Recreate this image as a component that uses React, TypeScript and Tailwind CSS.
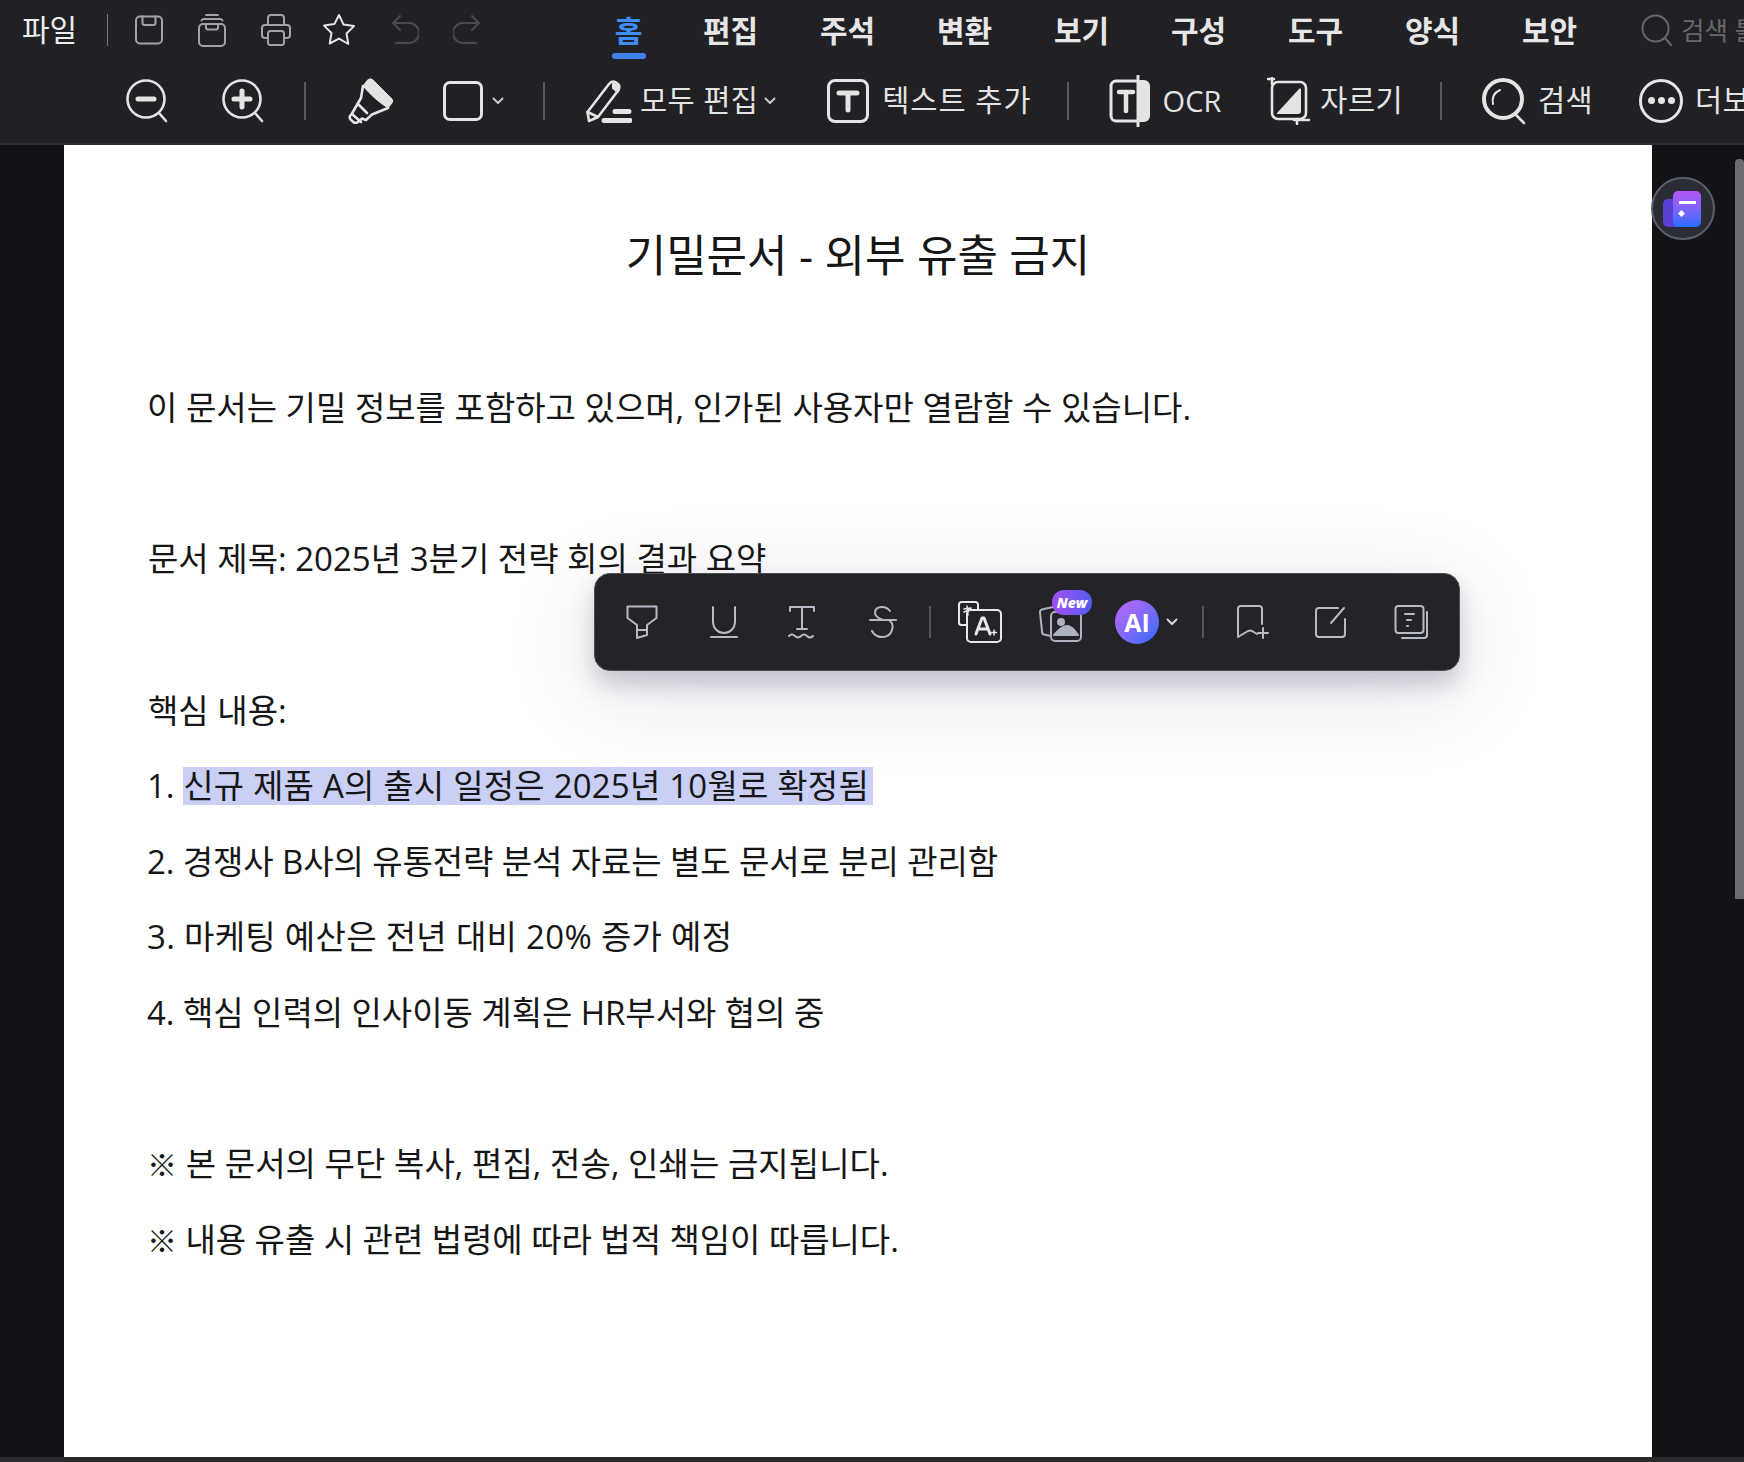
import React from "react";

const Svg = ({
  w,
  h,
  className,
  children,
}: {
  w: number;
  h: number;
  className?: string;
  children: React.ReactNode;
}) => (
  <svg
    width={w}
    height={h}
    viewBox={`0 0 ${w} ${h}`}
    fill="none"
    stroke="currentColor"
    strokeWidth={2}
    strokeLinecap="round"
    strokeLinejoin="round"
    className={`shrink-0 ${className ?? ""}`}
  >
    {children}
  </svg>
);

const Divider = ({ className }: { className: string }) => (
  <div className={`h-[38px] w-[2px] shrink-0 bg-[#5a5a5e] ${className}`} />
);

const Chevron = ({ className }: { className: string }) => (
  <Svg w={12} h={8} className={className}>
    <path d="M1.5 1.5 6 6l4.5-4.5" />
  </Svg>
);

const TopIcons = () => (
  <div className="flex shrink-0 items-center">
    <div className="flex w-[63px] justify-center text-[#a3a3a6]">
      <Svg w={28} h={30}>
        <rect x="1" y="1.5" width="26" height="27" rx="4" />
        <path d="M7.5 1.5V8a2 2 0 0 0 2 2h9a2 2 0 0 0 2-2V1.5" />
      </Svg>
    </div>
    <div className="flex w-[63px] justify-center text-[#a3a3a6]">
      <Svg w={28} h={34}>
        <path d="M8 2h12M3.5 7.5Q4 6 6 6h16q2 0 2.5 1.5" />
        <rect x="1" y="11" width="26" height="22" rx="4" />
        <path d="M8 11v3.5a2 2 0 0 0 2 2h8a2 2 0 0 0 2-2V11" />
      </Svg>
    </div>
    <div className="flex w-[66px] justify-center text-[#a3a3a6]">
      <Svg w={30} h={32}>
        <path d="M7 11V4a3 3 0 0 1 3-3h10a3 3 0 0 1 3 3v7" />
        <path d="M7 24H4a3 3 0 0 1-3-3v-7a3 3 0 0 1 3-3h22a3 3 0 0 1 3 3v7a3 3 0 0 1-3 3h-3" />
        <rect x="7" y="17" width="16" height="14" rx="2.5" />
      </Svg>
    </div>
    <div className="flex w-[60px] justify-center text-[#e4e4e4]">
      <Svg w={34} h={34}>
        <path d="m17 2 4.6 9.6 10.4 1.5-7.5 7.4 1.8 10.5L17 25.6 7.7 30.5l1.8-10.5L2 12.6l10.4-1.5z" />
      </Svg>
    </div>
    <div className="flex w-[72px] justify-center text-[#4a4a4e]">
      <Svg w={28} h={32}>
        <path d="M9 2 2 9l7 7M2 9h16a8 8 0 0 1 0 20H5" />
      </Svg>
    </div>
    <div className="flex w-[52px] justify-center text-[#4a4a4e]">
      <Svg w={28} h={32}>
        <path d="m19 2 7 7-7 7M26 9H10a8 8 0 0 0 0 20h13" />
      </Svg>
    </div>
  </div>
);

const tabs = ["편집", "주석", "변환", "보기", "구성", "도구", "양식", "보안"];

const TopRow = () => (
  <div className="flex h-[60px] shrink-0 items-center whitespace-nowrap pl-[22px]">
    <span className="w-[55px] shrink-0 text-[30px] leading-none text-[#ececec]">파일</span>
    <div className="ml-[30px] h-[32px] w-[1px] shrink-0 bg-[#77777a]" />
    <div className="ml-[9px] shrink-0">
      <TopIcons />
    </div>
    <div className="ml-[92px] flex shrink-0">
      <div className="relative w-[87px] shrink-0 text-center text-[30px] font-semibold text-[#3f8cf5]">
        홈
        <div className="absolute left-[27px] top-[45px] h-[6px] w-[34px] rounded-full bg-[#3f82f0]" />
      </div>
      {tabs.map((t) => (
        <div key={t} className="w-[117px] shrink-0 text-center text-[30px] font-semibold text-[#e6e6e6]">
          {t}
        </div>
      ))}
    </div>
    <div className="ml-[33px] flex shrink-0 items-center text-[#68686c]">
      <Svg w={32} h={32}>
        <circle cx="14.5" cy="14.5" r="13" />
        <path d="m24 24 6 7" />
      </Svg>
      <span className="ml-[8px] text-[25.5px]">검색 틀</span>
    </div>
  </div>
);

const ToolRow = () => (
  <div className="flex h-[83px] shrink-0 items-center whitespace-nowrap pb-[2px] pl-[126px] text-[29.5px] tracking-[0.4px] text-[#e4e4e4]">
    <Svg w={44} h={46}>
      <g strokeWidth={2.6}>
        <circle cx="20" cy="21" r="18.5" />
        <path d="m33 35 7 8" />
        <path d="M12 21h16" strokeWidth={5} />
      </g>
    </Svg>
    <Svg w={44} h={46} className="ml-[52px]">
      <g strokeWidth={2.6}>
        <circle cx="20" cy="21" r="18.5" />
        <path d="m33 35 7 8" />
        <path d="M12 21h16M20 13v16" strokeWidth={5} />
      </g>
    </Svg>
    <Divider className="ml-[38px]" />
    <Svg w={46} h={46} className="ml-[42px]">
      <path
        d="M15 8 20 1.5Q23 0 25 2L44 21q1.5 2 0 4l-4 5Q27 22 15 8z"
        fill="currentColor"
        strokeWidth={1}
      />
      <path
        d="M15 8 13 20 4 35.500 2 38q-1 2 1 4l3 2.500q2 1 4-.5l4-3.500 4 1.500 6-5.500 16-6.500"
        strokeWidth={2.600}
      />
      <path d="m4 36 9 8M10 26l9 9" strokeWidth={2.600} />
    </Svg>
    <div className="ml-[49px] h-[40px] w-[40px] shrink-0 rounded-[7px] border-[3px] border-[#e4e4e4]" />
    <Chevron className="ml-[9px] text-[#c9c9c9]" />
    <Divider className="ml-[39px]" />
    <Svg w={46} h={44} className="ml-[41px]">
      <g strokeWidth={2.600}>
        <path d="M3 42 1.500 33 23 5q3-4 7-1.500l1.500 1q3 2.500 1 6.500L12 38z" />
        <path d="m1.500 33 10.500 5" />
      </g>
      <path d="M27 5q3 0 5 3 1.500 3-.5 5L27 9z" fill="currentColor" />
      <path d="M29 32.500h14M18 41.500h26" strokeWidth={5} />
    </Svg>
    <span className="ml-[8px] shrink-0">모두 편집</span>
    <Chevron className="ml-[6px] text-[#c9c9c9]" />
    <div className="ml-[51px] flex h-[44px] w-[42px] shrink-0 items-center justify-center rounded-[8px] border-[3px] border-[#e4e4e4]">
      <Svg w={24} h={24}>
        <path d="M3 4h18M12 4v17" strokeWidth={5} />
      </Svg>
    </div>
    <span className="ml-[13px] shrink-0 tracking-[1px]">텍스트 추가</span>
    <Divider className="ml-[35px]" />
    <Svg w={44} h={52} className="ml-[40px]">
      <path d="M29 6H7a5 5 0 0 0-5 5v30a5 5 0 0 0 5 5h22" strokeWidth={3} />
      <path d="M10 17h14M17 17v19" strokeWidth={4.500} />
      <path d="M29 1v50" strokeWidth={3} />
      <path d="M30 6h5a5 5 0 0 1 5 5v30a5 5 0 0 1-5 5h-5z" fill="currentColor" />
    </Svg>
    <span className="ml-[10px] shrink-0 text-[29px] tracking-normal">OCR</span>
    <Svg w={44} h={48} className="ml-[46px]">
      <g strokeWidth={2.600}>
        <path d="M1 2h6M5 1v6" />
        <rect x="5" y="5" width="34" height="37" rx="6" />
        <path d="M30 47v-5M27 43h15" />
      </g>
      <path
        d="M10 36 32 12q2-2 2 1v21q0 3-3 3H11q-2 0-1-1z"
        fill="currentColor"
        stroke="none"
      />
    </Svg>
    <span className="ml-[9px] shrink-0">자르기</span>
    <Divider className="ml-[37px]" />
    <Svg w={46} h={48} className="ml-[40px]">
      <circle cx="21" cy="22" r="19" strokeWidth={4} />
      <path d="m33 37 9 9" strokeWidth={2.600} />
      <path d="M11 27q-2-10 7-14" strokeWidth={2} />
    </Svg>
    <span className="ml-[10px] shrink-0">검색</span>
    <div className="ml-[46px] flex h-[44px] w-[44px] shrink-0 items-center justify-center gap-[3px] rounded-full border-[3px] border-[#e4e4e4]">
      <div className="h-[7px] w-[7px] rounded-full bg-[#e4e4e4]" />
      <div className="h-[7px] w-[7px] rounded-full bg-[#e4e4e4]" />
      <div className="h-[7px] w-[7px] rounded-full bg-[#e4e4e4]" />
    </div>
    <span className="ml-[12px] shrink-0">더보기</span>
  </div>
);

const FloatingBar = () => (
  <div className="absolute left-[530px] top-[428px] z-10 flex h-[98px] w-[866px] items-center rounded-[16px] border border-[#4c5058] bg-[#232328] text-[#b6bac4] shadow-[0_14px_24px_rgba(40,40,70,0.22),0_20px_90px_rgba(60,60,110,0.14)]">
    <Svg w={32} h={36} className="ml-[31px]">
      <path d="M1.500 2.500h29V14L21 21v5H11v-5L1.500 14z" />
      <path d="M11 26v8l10-3v-5" />
    </Svg>
    <Svg w={28} h={34} className="ml-[52px]">
      <path d="M3 2v15a11 11 0 0 0 22 0V2M1 32h26" />
    </Svg>
    <Svg w={28} h={34} className="ml-[50px]">
      <path d="M2 6V2h24v4M14 2v22M9 24h10" />
      <path d="M1 31q3-3 6 0t6 0 6 0 6 0" />
    </Svg>
    <Svg w={28} h={34} className="ml-[53px]">
      <path d="M21 6Q18 2 13 2 6 2 6 8q0 4 8 7M1 15h26" />
      <path d="M21 16q4 3 2 9-2 7-10 7-7 0-10-6" />
    </Svg>
    <div className="ml-[32px] h-[32px] w-[2px] bg-[#55555a]" />
    <div className="relative ml-[27px] h-[42px] w-[44px] text-[#e8e8ec]">
      <Svg w={44} h={42}>
        <path d="M9 24H3a2.500 2.500 0 0 1-2-2.500V3.500A2.500 2.500 0 0 1 3.500 1h14A2.500 2.500 0 0 1 20 3.500V9" />
        <path d="m6 8 7-1M9 5l1 9M13 8l-7 3" strokeWidth={1.500} />
        <rect x="9" y="9" width="34" height="32" rx="4" />
        <path d="m18 33 6-16h2l6 16M20 28h10" strokeWidth={3} />
        <path d="M36 29v5M33.500 31.500h5" strokeWidth={1.500} />
      </Svg>
    </div>
    <div className="relative ml-[37px] h-[40px] w-[44px] text-[#aeb2c0]">
      <Svg w={44} h={40}>
        <path d="M12 34 5 32.500q-2-.5-2-3L1 10q0-2 2-2.500L14 5" />
        <rect x="12" y="10" width="30" height="29" rx="4" />
        <circle cx="22" cy="20" r="3" fill="currentColor" />
        <path d="M15 33q8-9 13-9t11 9z" fill="currentColor" />
      </Svg>
      <div className="absolute -top-[12px] left-[13px] flex h-[25px] w-[40px] items-center justify-center rounded-[12px] bg-gradient-to-r from-[#a24df0] to-[#4f5af0] text-[14px] font-extrabold italic text-white">
        New
      </div>
    </div>
    <div className="ml-[32px] flex h-[44px] w-[44px] shrink-0 items-center justify-center rounded-full bg-gradient-to-br from-[#c062f5] to-[#0f6afc] text-[25px] font-bold leading-none text-white">
      AI
    </div>
    <Chevron className="ml-[7px] text-[#d6d6da]" />
    <div className="ml-[24px] h-[32px] w-[2px] bg-[#55555a]" />
    <Svg w={34} h={34} className="ml-[32px]">
      <path d="M26 19V4a3 3 0 0 0-3-3H5a3 3 0 0 0-3 3v28l10-6q2-1 4 0l5 3" />
      <path d="M27 23v10M22 28h10" />
    </Svg>
    <Svg w={32} h={32} className="ml-[44px]">
      <path d="M24 2H5a3 3 0 0 0-3 3v23a3 3 0 0 0 3 3h23a3 3 0 0 0 3-3V13" />
      <path d="M30 2 17 17" />
    </Svg>
    <Svg w={34} h={34} className="ml-[48px]">
      <rect x="1.500" y="1" width="28" height="27" rx="3" />
      <path d="M11 9h9M13 15h4M13 21h1" />
      <path d="M33 7v23a3 3 0 0 1-3 3H8" />
    </Svg>
  </div>
);

const Line = ({ className, children }: { className?: string; children?: React.ReactNode }) => (
  <p className={`h-[75.6px] whitespace-nowrap leading-[75.6px] ${className ?? ""}`}>{children ?? " "}</p>
);

export default function App() {
  return (
    <div className="relative flex h-[1462px] w-[1744px] flex-col overflow-hidden bg-[#121316] font-['Open_Sans','Noto_Sans_CJK_KR',sans-serif]">
      <header className="w-full shrink-0 overflow-hidden border-b-2 border-[#2e2e32] bg-[#202025]">
        <TopRow />
        <ToolRow />
      </header>

      <main className="relative flex min-h-0 flex-1">
        <div className="relative ml-[64px] w-[1588px] bg-white px-[84px] pt-[74px] text-[33px] text-[#161616]">
          <h1 className="h-[75.6px] text-center text-[44px] leading-[73px]">
            기밀문서 - 외부 유출 금지
          </h1>
          <Line />
          <Line className="-ml-[1px]">이 문서는 기밀 정보를 포함하고 있으며, 인가된 사용자만 열람할 수 있습니다.</Line>
          <Line />
          <Line>문서 제목: 2025년 3분기 전략 회의 결과 요약</Line>
          <Line />
          <Line>핵심 내용:</Line>
          <Line className="-ml-[1px]">
            1.{" "}
            <span className="inline-block h-[38px] bg-[#c9cff5] pr-[4px] leading-[38px] tracking-[0.2px]">
              신규 제품 A의 출시 일정은 2025년 10월로 확정됨
            </span>
          </Line>
          <Line className="-ml-[1px] -tracking-[0.1px]">2. 경쟁사 B사의 유통전략 분석 자료는 별도 문서로 분리 관리함</Line>
          <Line className="-ml-[1px] tracking-[0.3px]">3. 마케팅 예산은 전년 대비 20% 증가 예정</Line>
          <Line className="-ml-[1px] -tracking-[0.05px]">4. 핵심 인력의 인사이동 계획은 HR부서와 협의 중</Line>
          <Line />
          <Line className="-ml-[1px] tracking-[0.05px]">
            <span className="text-[30px]">※</span> 본 문서의 무단 복사, 편집, 전송, 인쇄는 금지됩니다.
          </Line>
          <Line className="-ml-[1px] -tracking-[0.05px]">
            <span className="text-[30px]">※</span> 내용 유출 시 관련 법령에 따라 법적 책임이 따릅니다.
          </Line>
          <FloatingBar />
        </div>

        <div className="absolute left-[1651px] top-[32px] flex h-[63px] w-[64px] items-center justify-center rounded-full border-2 border-[#5c5e68] bg-[#2a2c36]">
          <div className="relative h-[36px] w-[38px] -translate-x-[1px]">
            <div className="absolute bottom-0 left-0 h-[28px] w-[20px] rounded-[5px] bg-[#5a3fd6]" />
            <div className="absolute bottom-0 right-0 h-[36px] w-[28px] rounded-[5px] bg-gradient-to-b from-[#b455f5] to-[#1a6bff]">
              <div className="absolute left-[6px] top-[10px] h-[3px] w-[17px] bg-white" />
              <div className="absolute left-[6px] top-[20px] h-[5px] w-[5px] rotate-45 bg-white" />
            </div>
          </div>
        </div>

        <div className="absolute left-[1735px] top-[14px] h-[740px] w-[9px] rounded-t-[4px] bg-[#6c6c70]" />
      </main>

      <div className="h-[5px] w-full shrink-0 bg-[#2a2a2c]" />
    </div>
  );
}
